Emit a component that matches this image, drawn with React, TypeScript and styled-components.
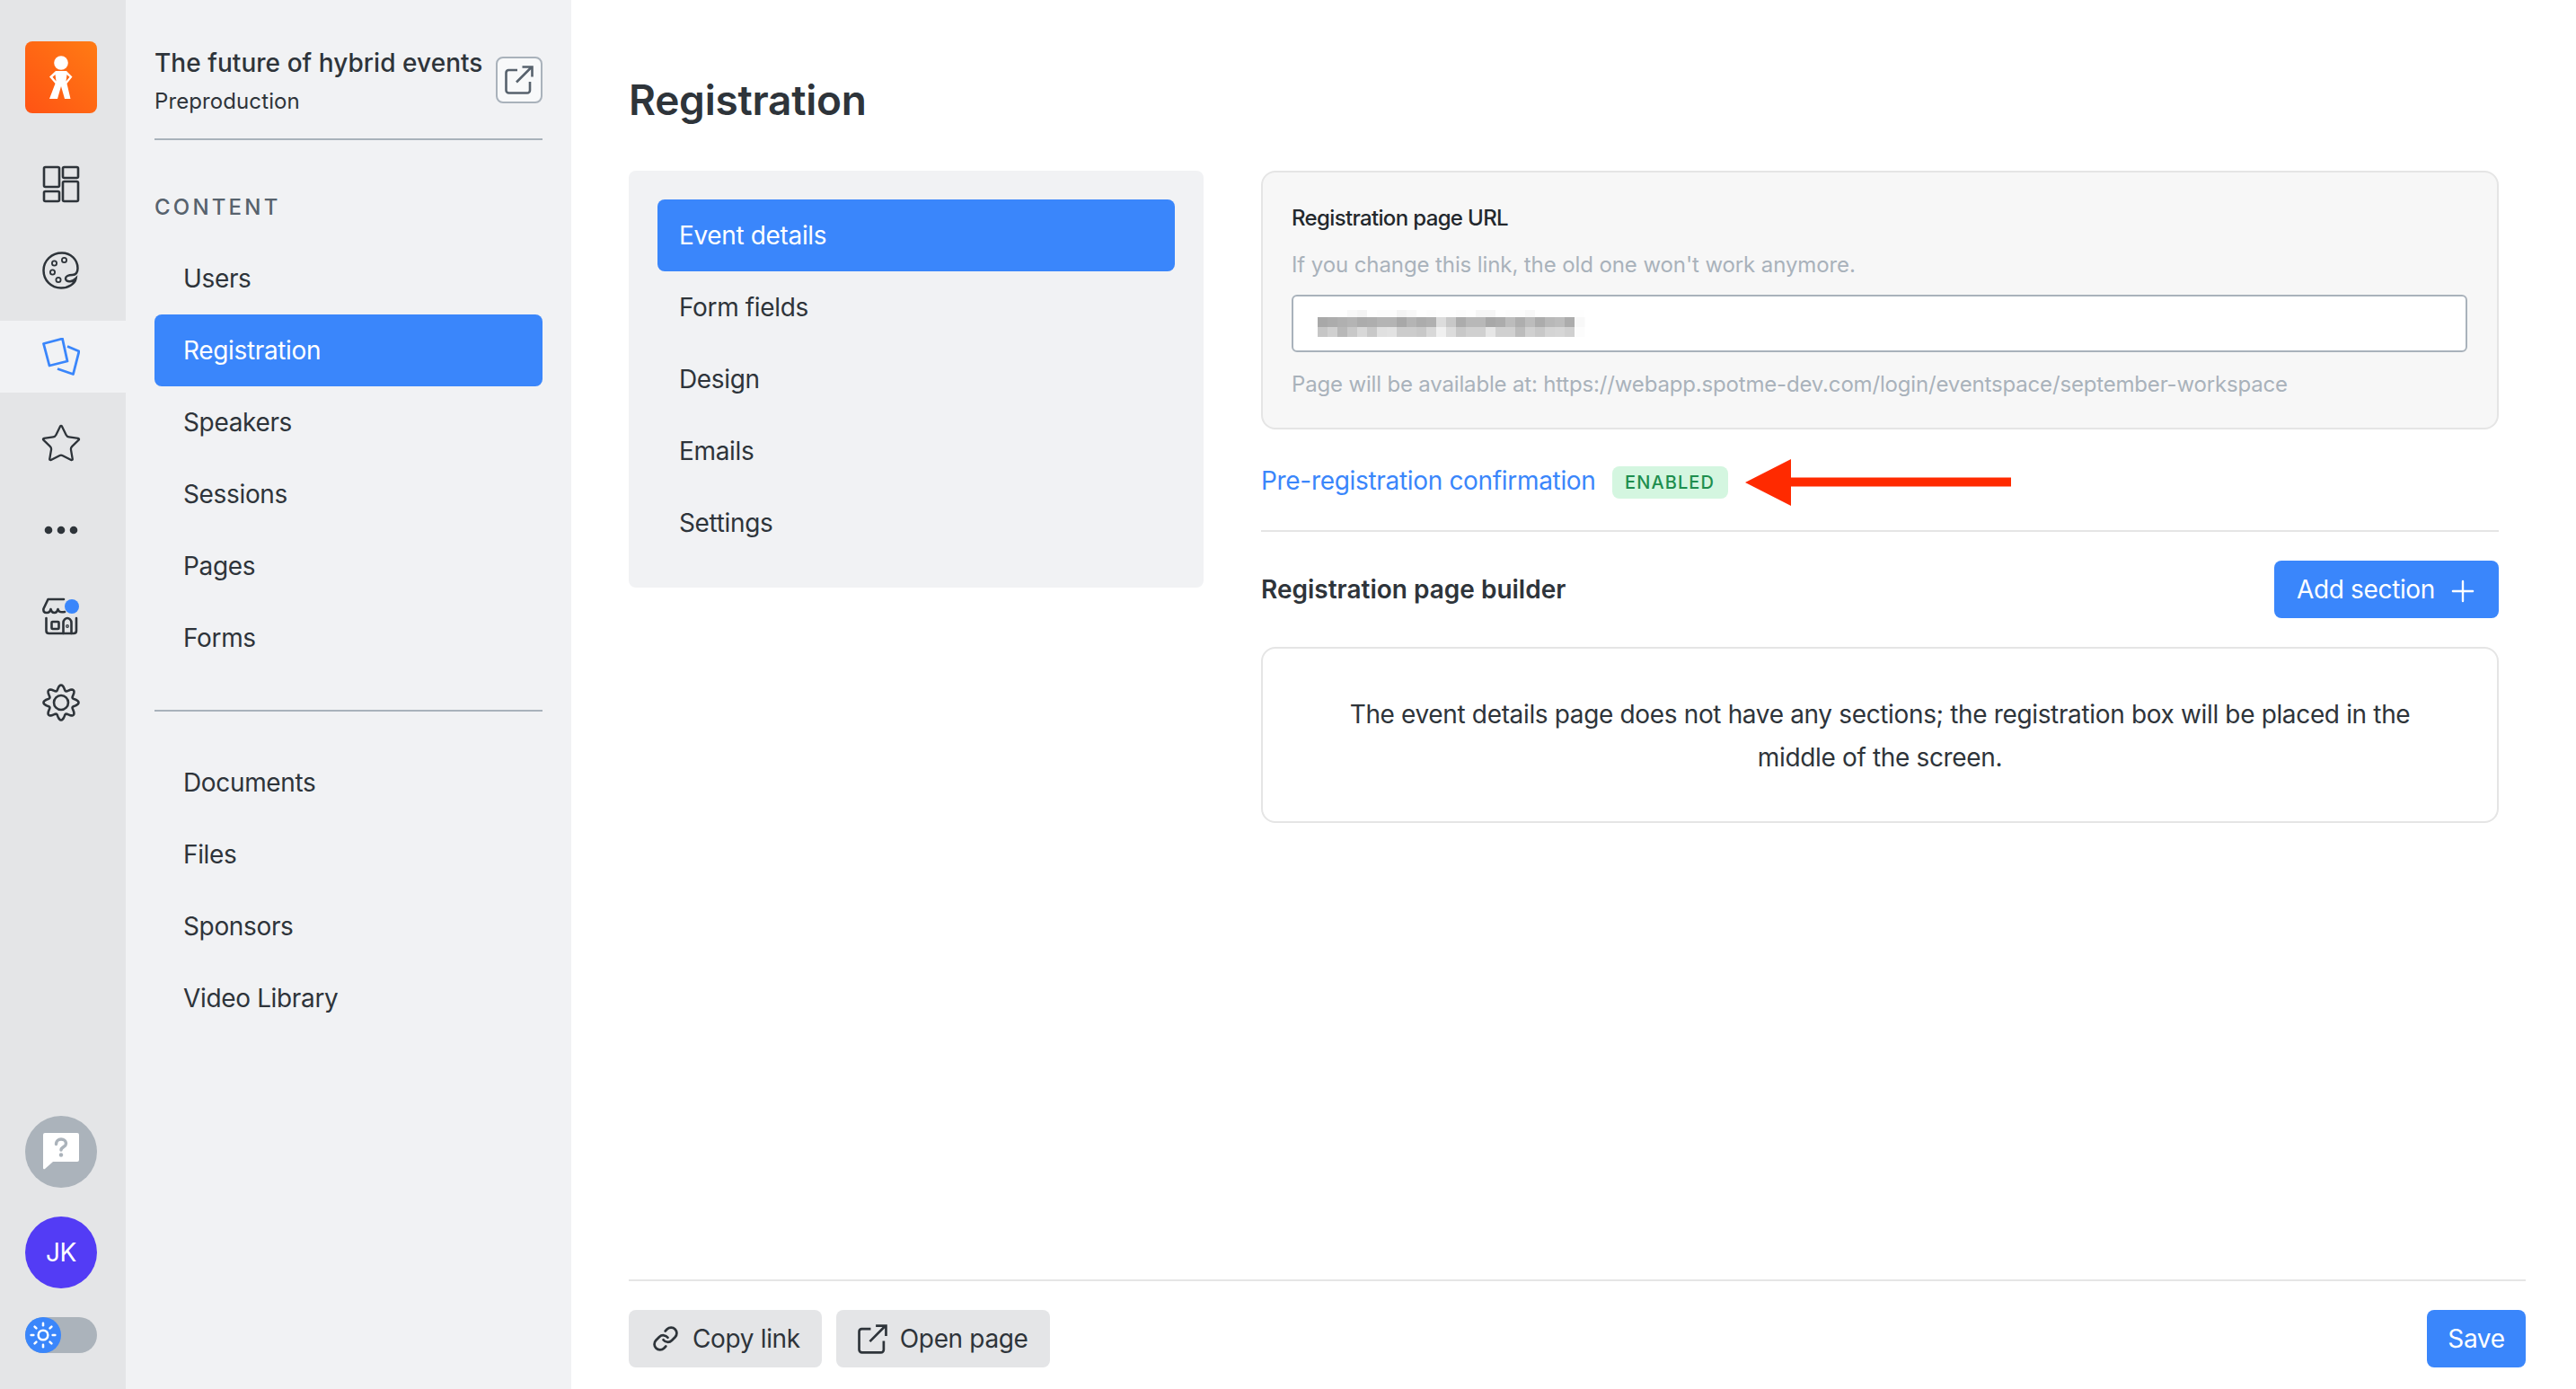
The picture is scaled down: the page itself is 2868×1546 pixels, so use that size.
import React from "react";
import styled, { createGlobalStyle } from "styled-components";
import { Star, Link as LinkIcon, Sun, Plus } from "lucide-react";

const Global = createGlobalStyle`
  html, body { margin: 0; padding: 0; height: 100%; background: #fff; }
  body { font-family: Inter, "Liberation Sans", sans-serif; color: #2e343a; font-size: 28px; letter-spacing: -0.35px; }
  #root { height: 100%; }
  * { box-sizing: border-box; }
`;

const Page = styled.div`
  display: flex;
  width: 2868px;
  height: 1546px;
  overflow: hidden;
`;
const Rail = styled.aside`
  width: 140px;
  flex: none;
  background: #e4e5e7;
  display: flex;
  flex-direction: column;
  align-items: stretch;
  padding: 46px 0 40px;
`;
const LogoBox = styled.div`
  width: 80px;
  height: 80px;
  margin: 0 32px 39px 28px;
  border-radius: 8px;
  background: linear-gradient(45deg, #ff5314 0%, #ff7b14 100%);
  display: flex;
`;
const RailList = styled.div`
  display: flex;
  flex-direction: column;
  gap: 16.2px;
`;
const RailItem = styled.div<{ $active?: boolean }>`
  height: 80px;
  padding-right: 4px;
  display: flex;
  align-items: center;
  justify-content: center;
  position: relative;
  color: ${(p) => (p.$active ? "#3a86fb" : "#2e343a")};
  background: ${(p) => (p.$active ? "#f1f2f4" : "transparent")};
`;
const RailBottom = styled.div`
  margin-top: auto;
  padding-right: 4px;
  display: flex;
  flex-direction: column;
  align-items: center;
  gap: 32px;
`;
const HelpCircle = styled.div`
  width: 80px;
  height: 80px;
  border-radius: 50%;
  background: #abb3bb;
  display: flex;
  align-items: center;
  justify-content: center;
`;
const Avatar = styled.div`
  width: 80px;
  height: 80px;
  border-radius: 50%;
  background: #533cf5;
  color: #fff;
  font-size: 28px;
  display: flex;
  align-items: center;
  justify-content: center;
`;
const Toggle = styled.div`
  width: 80px;
  height: 40px;
  border-radius: 20px;
  background: #abb3bb;
  display: flex;
`;
const ToggleThumb = styled.div`
  width: 40px;
  height: 40px;
  border-radius: 50%;
  background: #3a86fb;
  color: #fff;
  display: flex;
  align-items: center;
  justify-content: center;
`;

const Side = styled.aside`
  width: 496px;
  flex: none;
  background: #f1f2f4;
  padding: 46px 32px 0 32px;
`;
const SideHeader = styled.div`
  display: flex;
  align-items: center;
  justify-content: space-between;
  padding-bottom: 23px;
  border-bottom: 2px solid #a9b2bb;
`;
const SideTitle = styled.div`
  font-size: 28px;
  font-weight: 500;
  line-height: 48px;
  letter-spacing: 0.05px;
  white-space: nowrap;
`;
const SideSub = styled.div`
  font-size: 24px;
  line-height: 36px;
  letter-spacing: 0.1px;
  margin-top: 1px;
`;
const SquareBtn = styled.div`
  width: 52px;
  height: 52px;
  border: 2px solid #a9b2bb;
  border-radius: 8px;
  background: #f8f9fa;
  display: flex;
  align-items: center;
  justify-content: center;
  color: #57626d;
`;
const SectionLabel = styled.div`
  font-size: 24px;
  font-weight: 500;
  letter-spacing: 3.2px;
  color: #57626d;
  line-height: 30px;
  margin: 60px 0 24px;
`;
const SideItem = styled.div<{ $active?: boolean }>`
  height: 80px;
  display: flex;
  align-items: center;
  padding-left: 32px;
  border-radius: 8px;
  font-size: 28px;
  color: ${(p) => (p.$active ? "#fff" : "#2e343a")};
  background: ${(p) => (p.$active ? "#3a86fb" : "transparent")};
`;
const SideRule = styled.div`
  height: 2px;
  background: #a9b2bb;
  margin: 40px 0 39px;
`;

const Main = styled.main`
  flex: 1;
  min-width: 0;
  display: flex;
  flex-direction: column;
  padding: 81px 56px 24px 64px;
`;
const Heading = styled.h1`
  margin: 0 0 49px;
  font-size: 46px;
  font-weight: 600;
  line-height: 60px;
  letter-spacing: -0.25px;
  color: #2e343a;
`;
const Columns = styled.div`
  display: grid;
  grid-template-columns: 640px 1378px;
  column-gap: 64px;
  align-items: start;
`;
const TabPanel = styled.div`
  background: #f1f2f4;
  border-radius: 8px;
  padding: 32px;
`;
const TabItem = styled.div<{ $active?: boolean }>`
  height: 80px;
  display: flex;
  align-items: center;
  padding-left: 24px;
  border-radius: 8px;
  color: ${(p) => (p.$active ? "#fff" : "#2e343a")};
  background: ${(p) => (p.$active ? "#3a86fb" : "transparent")};
`;
const Content = styled.div`
  display: flex;
  flex-direction: column;
`;
const UrlCard = styled.section`
  height: 288px;
  background: #f7f7f7;
  border: 2px solid #e5e5e5;
  border-radius: 16px;
  padding: 33px 33px 0 32px;
`;
const FieldLabel = styled.div`
  font-size: 24px;
  font-weight: 500;
  line-height: 36px;
  letter-spacing: -0.65px;
  color: #23282d;
`;
const Hint = styled.div`
  font-size: 24px;
  line-height: 36px;
  letter-spacing: -0.1px;
  color: #a9b2bb;
  white-space: nowrap;
`;
const HintTop = styled(Hint)`
  margin-top: 16px;
`;
const HintBottom = styled(Hint)`
  margin-top: 18px;
  letter-spacing: -0.17px;
`;
const UrlInput = styled.div`
  height: 64px;
  margin-top: 15px;
  background: #fff;
  border: 2px solid #a9b2bb;
  border-radius: 6px;
  display: flex;
  align-items: center;
  padding: 3px 0 0 20px;
`;
const LinkRow = styled.div`
  display: flex;
  align-items: center;
  padding: 41px 0 35px;
`;
const TextLink = styled.span`
  color: #3a86fb;
  font-size: 28px;
  line-height: 36px;
  letter-spacing: -0.32px;
  margin-top: -4px;
`;
const Badge = styled.span`
  margin-left: 18px;
  width: 129px;
  height: 36px;
  border-radius: 8px;
  background: #d4f6e0;
  color: #1e8e4e;
  font-size: 20px;
  font-weight: 500;
  letter-spacing: 1.1px;
  display: flex;
  align-items: center;
  justify-content: center;
`;
const ArrowMark = styled.svg`
  margin: -8px 0 -8px 19px;
  flex: none;
`;
const Rule = styled.div`
  height: 2px;
  background: #e5e5e5;
`;
const BuilderRow = styled.div`
  display: flex;
  align-items: center;
  justify-content: space-between;
  margin-top: 32px;
`;
const BuilderTitle = styled.div`
  font-size: 28px;
  font-weight: 600;
  letter-spacing: 0;
`;
const AddBtn = styled.div`
  height: 64px;
  width: 250px;
  padding-left: 25px;
  border-radius: 8px;
  background: #3a86fb;
  color: #fff;
  font-size: 28px;
  display: flex;
  align-items: center;
  gap: 12px;
  white-space: nowrap;
  svg { margin-top: 4px; flex: none; }
`;
const EmptyBox = styled.div`
  margin-top: 32px;
  height: 196px;
  border: 2px solid #e5e5e5;
  border-radius: 16px;
  padding: 49px 60px 0;
  text-align: center;
  font-size: 28px;
  line-height: 48px;
`;
const Footer = styled.footer`
  margin-top: auto;
  border-top: 2px solid #e5e5e5;
  padding-top: 32px;
  display: flex;
  align-items: center;
  gap: 16px;
`;
const GreyBtn = styled.div<{ $gap: number; $left: number }>`
  height: 64px;
  padding: 0 24px 0 ${(p) => p.$left}px;
  border-radius: 8px;
  background: #e4e5e7;
  font-size: 28px;
  display: flex;
  align-items: center;
  gap: ${(p) => p.$gap}px;
`;
const SaveBtn = styled.div`
  margin-left: auto;
  height: 64px;
  width: 110px;
  border-radius: 8px;
  background: #3a86fb;
  color: #fff;
  display: flex;
  align-items: center;
  justify-content: center;
`;

const Logo = () => (
  <svg width="80" height="80" viewBox="0 0 80 80">
    <circle cx="40" cy="24" r="7.8" fill="#fff" />
    <path
      fill="#fff"
      fillRule="evenodd"
      d="M34 33H46L52.5 39.5 46.5 47 50.5 64H44L40 50 36 64H27L33.5 47 27 39.5ZM33.5 37 30.5 39.8 34.5 44.5ZM46.5 37 49.5 39.8 45.5 44.5Z"
    />
  </svg>
);
const DashIcon = () => (
  <svg width="42" height="42" viewBox="0 0 42 42" fill="none" stroke="currentColor" strokeWidth="2.6" strokeLinejoin="round">
    <rect x="2" y="2" width="17" height="22" rx="1.5" />
    <rect x="23" y="2" width="17" height="12" rx="1.5" />
    <rect x="2" y="29" width="17" height="11" rx="1.5" />
    <rect x="23" y="18" width="17" height="22" rx="1.5" />
  </svg>
);
const PaletteIcon = () => (
  <svg width="42" height="42" viewBox="0 0 42 42" fill="none" stroke="currentColor" strokeLinecap="round">
    <path strokeWidth="2.5" d="M22 1.5C31.5 1.5 39.5 9 39.5 18.5C39.5 23 37.5 26 33.5 26C29.5 26 26 27.5 26 30C26 32.5 28.5 33.5 31 33.2C33.5 33 35.5 32 37.5 30C36.5 36 29 40.5 21 40.5C10 40.5 1.5 32 1.5 21C1.5 10 10.5 1.5 22 1.5Z" />
    <g strokeWidth="1.8">
      <circle cx="13.5" cy="13" r="2.6" />
      <circle cx="24.5" cy="9.5" r="2.6" />
      <circle cx="11.5" cy="23" r="2.6" />
      <circle cx="18" cy="31.5" r="2.6" />
    </g>
  </svg>
);
const CardsIcon = () => (
  <svg width="42" height="42" viewBox="0 0 42 42" fill="none" stroke="currentColor" strokeWidth="2.8" strokeLinejoin="round">
    <path d="M1.5 6.5 22.5 1 28 26 8 31Z" />
    <path d="M28 9.5 41 15 34.5 40.5 17 34.5" />
  </svg>
);
const StoreIcon = () => (
  <svg width="42" height="42" viewBox="0 0 42 42" fill="none" stroke="currentColor" strokeWidth="2.6" strokeLinecap="round" strokeLinejoin="round">
    <path d="M24 2H6.5L1.5 12.5C1 15.5 2 17 5 17C7.5 17 9 15.5 9.5 13C10 15.5 11.5 17 13.5 17C15.5 17 17 15.5 17.5 13C18 15.5 20 17 25 16" />
    <path d="M4.5 23V37C4.5 39 5.5 40 7.5 40H35C37 40 38 39 38 37V23" />
    <rect x="10.5" y="27" width="8" height="8" rx="1" />
    <path d="M23.5 40V28C23.5 25 26 23 28 23C30 23 32.5 25 32.5 28V40" />
    <circle cx="28" cy="32" r=".6" />
  </svg>
);
const StoreDot = styled.span`
  position: absolute;
  width: 16px;
  height: 16px;
  border-radius: 50%;
  background: #3a86fb;
  left: 72px;
  top: 21px;
`;
const gearPath = (() => {
  const pts: string[] = [];
  for (let i = 0; i < 160; i++) {
    const t = (i / 160) * Math.PI * 2;
    const r = 16.6 + 2.9 * Math.cos(8 * t);
    pts.push(`${(21 + r * Math.sin(t)).toFixed(2)} ${(21 - r * Math.cos(t)).toFixed(2)}`);
  }
  return "M" + pts.join("L") + "Z";
})();
const GearIcon = () => (
  <svg width="42" height="42" viewBox="0 0 42 42" fill="none" stroke="currentColor" strokeWidth="2.6" strokeLinejoin="round">
    <path d={gearPath} />
    <circle cx="21" cy="21" r="8" />
  </svg>
);
const Dots = () => (
  <svg width="38" height="10" viewBox="0 0 38 10" fill="currentColor">
    <circle cx="5" cy="5" r="4.3" />
    <circle cx="19" cy="5" r="4.3" />
    <circle cx="33" cy="5" r="4.3" />
  </svg>
);
const HelpIcon = () => (
  <svg width="40" height="42" viewBox="0 0 40 42">
    <path fill="#fff" d="M2 0H38A2 2 0 0 1 40 2V30A2 2 0 0 1 38 32H11L2 40A1.2 1.2 0 0 1 0 39V2A2 2 0 0 1 2 0Z" />
    <path fill="none" stroke="#abb3bb" strokeWidth="3.4" strokeLinecap="round" d="M14.5 12.5C14.5 9 17 7 20 7C23 7 25.5 9 25.5 12C25.5 15.5 20 15.5 20 19" />
    <circle cx="20" cy="24.5" r="2.2" fill="#abb3bb" />
  </svg>
);
const ExternalIcon = ({ size, sw }: { size: number; sw: number }) => (
  <svg width={size} height={size} viewBox="0 0 32 32" fill="none" stroke="currentColor" strokeWidth={sw}>
    <path d="M14 5H4A3 3 0 0 0 1.5 8V27.5A3 3 0 0 0 4.5 30.5H25A3 3 0 0 0 28 27.5V18" />
    <path d="M13 18.5 30 1.5M19.5 1.5H30.5V12.5" />
  </svg>
);

const row1 = ["a8","ac","b0","b4","ac","ae","b4","b4","a8","b4","ac","b0","dc","c8","ac","b8","b8","a8","ac","bc","ae","bc","ac","b8","bc","ac","f8"];
const row2 = ["c6","d0","b8","c8","d8","c8","e0","e2","cc","cc","c8","d8","f0","dc","c8","d0","d0","e6","d0","d0","bc","d0","c8","d4","d6","d0","fc"];
const row0 = ["fe","fe","fe","f8","f4","fe","fc","fc","f4","f8","fe","fc","fe","fe","fc","fe","f6","f6","fe","fc","fc","f8","fe","fe","fe","fe","fe"];
const Mosaic = () => (
  <svg width="310" height="34" viewBox="0 0 310 34" style={{ filter: "blur(0.6px)" }}>
    {row0.map((c, i) => <rect key={"a" + i} x={7 + i * 11} y="0" width="11.4" height="8" fill={"#" + c + c + c} />)}
    {row1.map((c, i) => <rect key={"b" + i} x={7 + i * 11} y="8" width="11.4" height="11" fill={"#" + c + c + c} />)}
    {row2.map((c, i) => <rect key={"c" + i} x={7 + i * 11} y="19" width="11.4" height="11" fill={"#" + c + c + c} />)}
  </svg>
);

const content = ["Users", "Registration", "Speakers", "Sessions", "Pages", "Forms"];
const more = ["Documents", "Files", "Sponsors", "Video Library"];
const tabs = ["Event details", "Form fields", "Design", "Emails", "Settings"];

export default function App() {
  return (
    <Page>
      <Global />
      <Rail>
        <LogoBox><Logo /></LogoBox>
        <RailList>
          <RailItem><DashIcon /></RailItem>
          <RailItem><PaletteIcon /></RailItem>
          <RailItem $active><CardsIcon /></RailItem>
          <RailItem><Star size={48} strokeWidth={1.15} /></RailItem>
          <RailItem><Dots /></RailItem>
          <RailItem><StoreIcon /><StoreDot /></RailItem>
          <RailItem><GearIcon /></RailItem>
        </RailList>
        <RailBottom>
          <HelpCircle><HelpIcon /></HelpCircle>
          <Avatar>JK</Avatar>
          <Toggle><ToggleThumb><Sun size={32} strokeWidth={1.9} /></ToggleThumb></Toggle>
        </RailBottom>
      </Rail>
      <Side>
        <SideHeader>
          <div>
            <SideTitle>The future of hybrid events</SideTitle>
            <SideSub>Preproduction</SideSub>
          </div>
          <SquareBtn><ExternalIcon size={32} sw={2.6} /></SquareBtn>
        </SideHeader>
        <SectionLabel>CONTENT</SectionLabel>
        {content.map((t) => (
          <SideItem key={t} $active={t === "Registration"}>{t}</SideItem>
        ))}
        <SideRule />
        {more.map((t) => (
          <SideItem key={t}>{t}</SideItem>
        ))}
      </Side>
      <Main>
        <Heading>Registration</Heading>
        <Columns>
          <TabPanel>
            {tabs.map((t, i) => (
              <TabItem key={t} $active={i === 0}>{t}</TabItem>
            ))}
          </TabPanel>
          <Content>
            <UrlCard>
              <FieldLabel>Registration page URL</FieldLabel>
              <HintTop>If you change this link, the old one won't work anymore.</HintTop>
              <UrlInput><Mosaic /></UrlInput>
              <HintBottom>Page will be available at: https://webapp.spotme-dev.com/login/eventspace/september-workspace</HintBottom>
            </UrlCard>
            <LinkRow>
              <TextLink>Pre-registration confirmation</TextLink>
              <Badge>ENABLED</Badge>
              <ArrowMark width="296" height="52" viewBox="0 0 296 52">
                <path fill="#ff2a00" d="M0 26 51 0V20.5H296V30.5H51V52Z" />
              </ArrowMark>
            </LinkRow>
            <Rule />
            <BuilderRow>
              <BuilderTitle>Registration page builder</BuilderTitle>
              <AddBtn>Add section <Plus size={38} strokeWidth={1.5} /></AddBtn>
            </BuilderRow>
            <EmptyBox>
              The event details page does not have any sections; the registration box will be placed in the middle of the screen.
            </EmptyBox>
          </Content>
        </Columns>
        <Footer>
          <GreyBtn $left={26} $gap={15}><LinkIcon size={30} strokeWidth={2.2} />Copy link</GreyBtn>
          <GreyBtn $left={24} $gap={14}><ExternalIcon size={33} sw={2.6} />Open page</GreyBtn>
          <SaveBtn>Save</SaveBtn>
        </Footer>
      </Main>
    </Page>
  );
}
